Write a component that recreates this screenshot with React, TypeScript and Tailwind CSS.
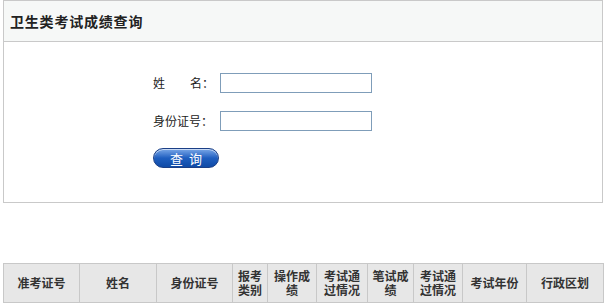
import React from "react";

const cols: { label: React.ReactNode; w: number }[] = [
  { label: "准考证号", w: 76 },
  { label: "姓名", w: 77 },
  { label: "身份证号", w: 76 },
  { label: <>报考<br />类别</>, w: 35 },
  { label: <>操作成<br />绩</>, w: 49 },
  { label: <>考试通<br />过情况</>, w: 51 },
  { label: <>笔试成<br />绩</>, w: 46 },
  { label: <>考试通<br />过情况</>, w: 49 },
  { label: "考试年份", w: 64 },
  { label: "行政区划", w: 77 },
];

export default function App() {
  return (
    <div
      className="w-[604px] h-[304px] overflow-hidden bg-white text-[#333]"
      style={{ fontFamily: '"Noto Sans CJK SC", "Liberation Sans", sans-serif' }}
    >
      <div className="ml-[3px] w-[600px] h-[203px] border border-[#c9c9c9] flex flex-col">
        <div className="h-[41px] bg-[#f6f8f7] border-b border-[#c9c9c9] flex items-center pl-[6px] text-[14px] font-bold tracking-[0.8px] text-[#222]">
          卫生类考试成绩查询
        </div>
        <div className="flex flex-col pl-[149px] pt-[31px] text-[12px] text-[#222]">
          <div className="flex items-center h-[20px]">
            <span className="w-[67px] flex">
              <span>姓</span>
              <span className="ml-[25px]">名：</span>
            </span>
            <div className="w-[152px] h-[20px] border border-[#7f9db9] bg-white" />
          </div>
          <div className="flex items-center h-[20px] mt-[18px]">
            <span className="w-[67px]">身份证号：</span>
            <div className="w-[152px] h-[20px] border border-[#7f9db9] bg-white" />
          </div>
          <div className="mt-[17px]">
            <button className="w-[66px] h-[20px] rounded-full border border-[#1b3f86] bg-gradient-to-b from-[#7aa8e8] via-[#1f5fc0] to-[#0f4aa6] text-white text-[13px] leading-none tracking-[6px] pl-[6px] shadow-[inset_0_1px_0_rgba(255,255,255,0.6)]">
              查询
            </button>
          </div>
        </div>
      </div>
      <div className="mt-[60px] ml-[3px]">
        <table className="border-collapse table-fixed w-[601px]">
          <thead>
            <tr className="h-[39px]">
              {cols.map((c, i) => (
                <th
                  key={i}
                  style={{ width: c.w }}
                  className="border border-[#c8c8c8] bg-[#e7e7e7] text-[12px] font-bold text-[#333] leading-[14px] p-0 text-center"
                >
                  {c.label}
                </th>
              ))}
            </tr>
          </thead>
        </table>
      </div>
    </div>
  );
}
